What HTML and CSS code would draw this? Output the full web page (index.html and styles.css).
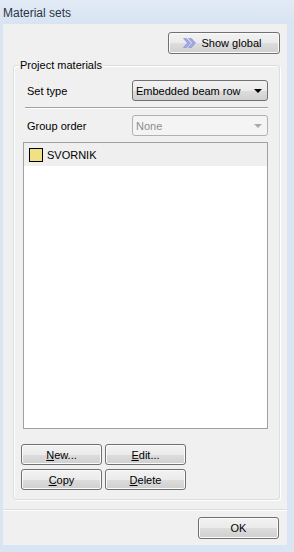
FILE: index.html
```html
<!DOCTYPE html>
<html lang="en">
<head>
  <meta charset="UTF-8" />
  <title>Material sets</title>
  <link rel="stylesheet" href="styles.css">
</head>
<body>
  <div class="window">
    <div class="titlebar">Material sets</div>
    <div class="panel">
      <div class="content">
        <div class="top-row">
          <button class="btn btn-global">
            <svg width="13" height="10" viewBox="0 0 13 10">
              <path d="M0.5 0.5 L4.5 5 L0.5 9.5 L3.5 9.5 L7.5 5 L3.5 0.5 Z" fill="#a3a8e6" stroke="#858cd6" stroke-width="0.6"/>
              <path d="M5.5 0.5 L9.5 5 L5.5 9.5 L8.5 9.5 L12.5 5 L8.5 0.5 Z" fill="#a3a8e6" stroke="#858cd6" stroke-width="0.6"/>
            </svg>
            <span>Show <u>g</u>lobal</span>
          </button>
        </div>

        <div class="group">
          <span class="group-title">Project materials</span>

          <div class="field">
            <span class="field-label">Set type</span>
            <div class="combo">
              <span>Embedded beam row</span>
              <span class="arrow"></span>
            </div>
          </div>

          <div class="separator"></div>

          <div class="field">
            <span class="field-label">Group order</span>
            <div class="combo disabled">
              <span>None</span>
              <span class="arrow"></span>
            </div>
          </div>

          <div class="listbox">
            <div class="list-item selected">
              <span class="swatch"></span>
              <span>SVORNIK</span>
            </div>
          </div>

          <div class="actions">
            <button class="btn"><span><u>N</u>ew...</span></button>
            <button class="btn"><span><u>E</u>dit...</span></button>
            <button class="btn"><span><u>C</u>opy</span></button>
            <button class="btn"><span><u>D</u>elete</span></button>
          </div>
        </div>
      </div>

      <div class="footer">
        <button class="btn btn-ok">OK</button>
      </div>
    </div>
  </div>
</body>
</html>
```

FILE: styles.css
```css
* {
  box-sizing: border-box;
}

body {
  margin: 0;
  background: #dae5f3;
  font-family: 'Liberation Sans', Arial, sans-serif;
  font-size: 11px;
  color: #000;
}

.window {
  width: 294px;
  height: 552px;
}

.titlebar {
  height: 24px;
  padding: 6px 0 0 3px;
  font-size: 12px;
  color: #2b3445;
  background: linear-gradient(#e2ebf6, #d8e4f2);
}

.panel {
  margin: 0 7px 0 3px;
  height: 521px;
  background: #f0f0f0;
  display: flex;
  flex-direction: column;
}

.content {
  height: 485px;
  padding-top: 8px;
}

.top-row {
  display: flex;
  justify-content: flex-end;
  padding-right: 7px;
}

/* Buttons */
.btn {
  font-family: inherit;
  font-size: 11px;
  color: #000;
  height: 21px;
  width: 81px;
  border: 1px solid #707070;
  border-radius: 3px;
  background: linear-gradient(#f2f2f2 0%, #ebebeb 50%, #dddddd 51%, #cfcfcf 100%);
  box-shadow: inset 0 0 0 1px #fbfbfb;
  padding: 0;
  display: flex;
  align-items: center;
  justify-content: center;
}

.btn-global {
  width: 112px;
  height: 22px;
  gap: 6px;
  padding-right: 4px;
}

.btn-ok {
  height: 22px;
}

/* Group box */
.group {
  position: relative;
  margin: 11px 7px 0 10px;
  height: 435px;
  border: 1px solid #d5dfe5;
  border-radius: 3px;
  box-shadow: inset 1px 1px 0 #fff, 1px 1px 0 #fff;
  padding: 14px 11px 0 9px;
}

.group-title {
  position: absolute;
  top: -7px;
  left: 5px;
  padding: 0 1px;
  background: #f0f0f0;
  line-height: 13px;
}

.field {
  display: flex;
  align-items: center;
}

.field-label {
  width: 109px;
  padding-left: 4px;
}

.combo {
  flex: 1;
  height: 21px;
  border: 1px solid #707070;
  border-radius: 3px;
  background: linear-gradient(#f2f2f2 0%, #ebebeb 50%, #dddddd 51%, #cfcfcf 100%);
  display: flex;
  align-items: center;
  justify-content: space-between;
  padding: 0 5px 0 3px;
}

.arrow {
  width: 0;
  height: 0;
  border-left: 4px solid transparent;
  border-right: 4px solid transparent;
  border-top: 4px solid #000;
}

.combo.disabled {
  background: #f4f4f4;
  border-color: #adb2b5;
  color: #8d8d8d;
}

.combo.disabled .arrow {
  border-top-color: #a9a9a9;
}

.separator {
  margin: 6px 0 6px 2px;
  border-top: 1px solid #a0a0a0;
  border-bottom: 1px solid #fff;
}

.listbox {
  margin-top: 6px;
  height: 287px;
  border: 1px solid #a0a0a0;
  background: #fff;
}

.list-item {
  height: 23px;
  display: flex;
  align-items: center;
  gap: 4px;
  padding-left: 5px;
}

.list-item.selected {
  background: #efefef;
}

.swatch {
  width: 14px;
  height: 14px;
  border: 1px solid #000;
  background: #f0e184;
}

.actions {
  margin: 15px 0 0 -2px;
  display: grid;
  grid-template-columns: 81px 81px;
  gap: 4px 3px;
}

.footer {
  flex: 1;
  border-top: 1px solid #dcdcdc;
  box-shadow: inset 0 1px 0 #fff;
  display: flex;
  justify-content: flex-end;
  align-items: flex-start;
  padding: 7px 8px 0 0;
}
```
